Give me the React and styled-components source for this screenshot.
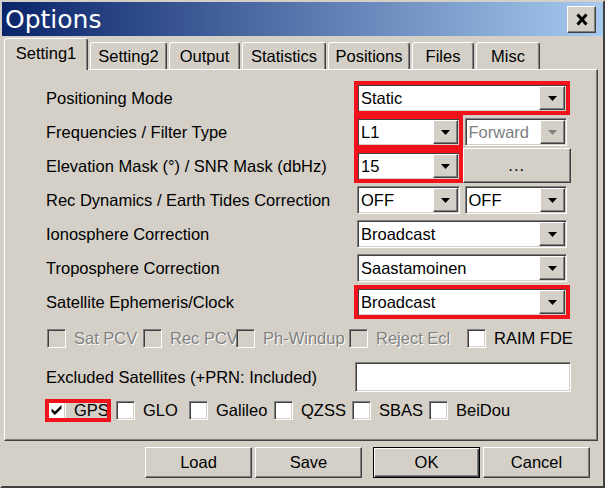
import React from 'react';
import styled, { createGlobalStyle, css } from 'styled-components';

const face = '#d4d0c8';
const shadow = '#808080';
const dark = '#404040';
const mark = '#f2121c';

const GlobalStyle = createGlobalStyle`
  html, body {
    margin: 0;
    padding: 0;
    background: ${face};
  }
  body {
    font-family: "Liberation Sans", Arial, sans-serif;
    font-size: 16.5px;
    color: #000;
  }
  * {
    box-sizing: border-box;
  }
`;

const raised = css`
  background: ${face};
  border: 1px solid;
  border-color: #fff ${dark} ${dark} #fff;
  box-shadow: inset -1px -1px ${shadow};
`;

const sunken = css`
  border: 1px solid;
  border-color: ${shadow} #fff #fff ${shadow};
  box-shadow: inset 1px 1px ${dark}, inset -1px -1px ${face};
`;

const Window = styled.div`
  width: 605px;
  height: 488px;
  background: ${face};
  border: 2px solid;
  border-color: ${face} ${dark} ${dark} ${face};
  display: flex;
  flex-direction: column;
`;

const TitleBar = styled.div`
  height: 34px;
  flex: none;
  background: linear-gradient(to right, #0a246a, #a6caf0);
  display: flex;
  align-items: center;
  justify-content: space-between;
  padding: 0 7px 0 3px;
`;

const Title = styled.div`
  color: #fff;
  font-family: "DejaVu Sans", sans-serif;
  font-size: 25px;
  line-height: 1;
`;

const CloseButton = styled.div`
  ${raised};
  width: 29px;
  height: 27px;
  display: flex;
  align-items: center;
  justify-content: center;
`;

const TabRow = styled.div`
  height: 33px;
  flex: none;
  display: flex;
  align-items: flex-end;
  gap: 2px;
  padding-left: 2px;
  position: relative;
  z-index: 1;
`;

const Tab = styled.div`
  width: ${(p) => p.$w}px;
  height: 27px;
  border: 1px solid;
  border-bottom: none;
  border-color: #fff ${dark} transparent #fff;
  box-shadow: inset -1px 0 ${shadow};
  border-radius: 3px 3px 0 0;
  display: flex;
  align-items: center;
  justify-content: center;
  background: ${face};
  ${(p) =>
    p.$active &&
    css`
      height: 32px;
      margin-bottom: -1px;
      padding-bottom: 2px;
    `}
`;

const Panel = styled.div`
  margin: 0 5px 0 2px;
  height: 372px;
  flex: none;
  border: 1px solid;
  border-color: #fff ${dark} ${dark} #fff;
  box-shadow: inset -1px -1px ${shadow};
  padding: 14px 30px 0 41px;
  display: flex;
  flex-direction: column;
`;

const Row = styled.div`
  display: grid;
  grid-template-columns: 1fr 210px;
  align-items: center;
  height: ${(p) => p.$h || 28}px;
  margin-top: ${(p) => p.$top || 0}px;
`;

const Label = styled.div`
  white-space: nowrap;
`;

const Split = styled.div`
  display: grid;
  grid-template-columns: 1fr 1fr;
  gap: 5px;
  height: 100%;
`;

const Combo = styled.div`
  ${sunken};
  height: 28px;
  padding: 1px;
  background: #fff;
  display: flex;
  align-items: stretch;
  color: ${(p) => (p.$disabled ? shadow : '#000')};
  ${(p) =>
    p.$mark &&
    css`
      outline: 4px solid ${mark};
      outline-offset: -1px;
    `}
`;

const ComboText = styled.div`
  flex: 1;
  padding-left: 2px;
  display: flex;
  align-items: center;
  white-space: nowrap;
  overflow: hidden;
`;

const ArrowButton = styled.div`
  ${raised};
  width: ${(p) => (p.$wide ? 26 : 25)}px;
  display: flex;
  align-items: center;
  justify-content: center;
`;

const DotsButton = styled.div`
  ${raised};
  box-shadow: inset -1px -1px ${shadow}, inset 1px 1px ${face};
  margin: -4px -4px -3px -2px;
  display: flex;
  align-items: center;
  justify-content: center;
  letter-spacing: 1px;
`;

const TextField = styled.div`
  ${sunken};
  background: #fff;
  height: 30px;
  margin: 0 -4px 0 -2px;
`;

const CheckRow = styled.div`
  display: flex;
  align-items: center;
  gap: ${(p) => p.$gap}px;
  height: 28px;
  padding-left: 1px;
  margin-top: ${(p) => p.$top}px;
`;

const CheckItem = styled.div`
  display: flex;
  align-items: center;
  gap: 8px;
  flex: none;
  width: ${(p) => (p.$w ? `${p.$w}px` : 'auto')};
  white-space: nowrap;
  color: ${(p) => (p.$disabled ? shadow : '#000')};
  text-shadow: ${(p) => (p.$disabled ? '1px 1px #fff' : 'none')};
  ${(p) =>
    p.$mark &&
    css`
      outline: 4px solid ${mark};
      outline-offset: -2px;
    `}
`;

const Box = styled.span`
  ${sunken};
  width: 19px;
  height: 19px;
  flex: none;
  background: ${(p) => (p.$disabled ? face : '#fff')};
  display: flex;
  align-items: center;
  justify-content: center;
`;

const ButtonBar = styled.div`
  display: flex;
  justify-content: flex-end;
  gap: 3px;
  margin-top: 6px;
  padding-right: 13px;
`;

const Button = styled.div`
  ${raised};
  width: 107px;
  height: 31px;
  display: flex;
  align-items: center;
  justify-content: center;
  ${(p) =>
    p.$default &&
    css`
      margin-left: 8px;
      border-color: #000;
      box-shadow: inset 1px 1px #fff, inset -1px -1px ${dark}, inset -2px -2px ${shadow};
    `}
`;

const Arrow = ({ disabled }) => (
  <svg width="9" height="5" viewBox="0 0 9 5">
    <polygon points="0,0 9,0 4.5,5" fill={disabled ? shadow : '#000'} />
  </svg>
);

const Check = () => (
  <svg width="11" height="10" viewBox="0 0 7 7">
    <polygon points="0,2.4 2.4,4.6 7,0 7,2.4 2.4,7 0,4.8" fill="#000" />
  </svg>
);

const CloseIcon = () => (
  <svg width="12" height="13" viewBox="0 0 12 13">
    <path d="M1.5 1.5 L10.5 11.5 M10.5 1.5 L1.5 11.5" stroke="#000" strokeWidth="3" />
  </svg>
);

const tabs = [
  { name: 'Setting1', w: 84 },
  { name: 'Setting2', w: 77 },
  { name: 'Output', w: 71 },
  { name: 'Statistics', w: 84 },
  { name: 'Positions', w: 82 },
  { name: 'Files', w: 62 },
  { name: 'Misc', w: 64 },
];

const rows = [
  { label: 'Positioning Mode', controls: [{ value: 'Static', mark: true }] },
  {
    label: 'Frequencies / Filter Type',
    controls: [{ value: 'L1', mark: true }, { value: 'Forward', disabled: true }],
  },
  {
    label: 'Elevation Mask (°) / SNR Mask (dbHz)',
    controls: [{ value: '15', mark: true }, { button: '...' }],
  },
  {
    label: 'Rec Dynamics / Earth Tides Correction',
    controls: [{ value: 'OFF' }, { value: 'OFF' }],
  },
  { label: 'Ionosphere Correction', controls: [{ value: 'Broadcast' }] },
  { label: 'Troposphere Correction', controls: [{ value: 'Saastamoinen' }] },
  { label: 'Satellite Ephemeris/Clock', controls: [{ value: 'Broadcast', mark: true }] },
];

const options = [
  { label: 'Sat PCV', w: 96, disabled: true },
  { label: 'Rec PCV', w: 93, disabled: true },
  { label: 'Ph-Windup', w: 113, disabled: true },
  { label: 'Reject Ecl', w: 118, disabled: true },
  { label: 'RAIM FDE' },
];

const systems = [
  { label: 'GPS', w: 62, checked: true, mark: true },
  { label: 'GLO', w: 66 },
  { label: 'Galileo', w: 78 },
  { label: 'QZSS', w: 71 },
  { label: 'SBAS', w: 70 },
  { label: 'BeiDou' },
];

const ComboBox = ({ value, disabled, mark, wide }) => (
  <Combo $disabled={disabled} $mark={mark}>
    <ComboText>{value}</ComboText>
    <ArrowButton $wide={wide}>
      <Arrow disabled={disabled} />
    </ArrowButton>
  </Combo>
);

const Control = ({ c, wide }) =>
  c.button ? <DotsButton>{c.button}</DotsButton> : <ComboBox {...c} wide={wide} />;

const CheckBox = ({ label, w, checked, disabled, mark }) => (
  <CheckItem $w={w} $disabled={disabled} $mark={mark}>
    <Box $disabled={disabled}>{checked && <Check />}</Box>
    {label}
  </CheckItem>
);

const App = () => {
  return (
    <>
      <GlobalStyle />
      <Window>
        <TitleBar>
          <Title>Options</Title>
          <CloseButton>
            <CloseIcon />
          </CloseButton>
        </TitleBar>
        <TabRow>
          {tabs.map((t, i) => (
            <Tab key={t.name} $w={t.w} $active={i === 0}>
              {t.name}
            </Tab>
          ))}
        </TabRow>
        <Panel>
          {rows.map((r, i) => (
            <Row key={r.label} $top={i === 0 ? 0 : 6}>
              <Label>{r.label}</Label>
              {r.controls.length === 1 ? (
                <Control c={r.controls[0]} wide />
              ) : (
                <Split>
                  {r.controls.map((c, j) => (
                    <Control key={j} c={c} />
                  ))}
                </Split>
              )}
            </Row>
          ))}
          <CheckRow $gap={0} $top={8}>
            {options.map((o) => (
              <CheckBox key={o.label} {...o} />
            ))}
          </CheckRow>
          <Row $h={30} $top={10}>
            <Label>Excluded Satellites (+PRN: Included)</Label>
            <TextField />
          </Row>
          <CheckRow $gap={7} $top={4}>
            {systems.map((s) => (
              <CheckBox key={s.label} {...s} />
            ))}
          </CheckRow>
        </Panel>
        <ButtonBar>
          <Button>Load</Button>
          <Button>Save</Button>
          <Button $default>OK</Button>
          <Button>Cancel</Button>
        </ButtonBar>
      </Window>
    </>
  );
};

export default App;
